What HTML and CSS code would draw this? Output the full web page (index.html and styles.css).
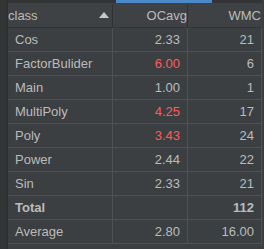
FILE: index.html
```html
<!DOCTYPE html>
<html>
<head>
<meta charset="utf-8">
<link rel="stylesheet" href="styles.css">
</head>
<body>
<div class="page">
  <div class="gutter"></div>
  <div class="table">
    <div class="head">
      <div class="hcell hname"><span>class</span><span class="arrow"></span></div>
      <div class="hcell hnum">OCavg</div>
      <div class="hcell hnum last">WMC</div>
      <div class="tab-indicator"></div>
    </div>
    <div class="row"><div class="c name">Cos</div><div class="c num">2.33</div><div class="c num">21</div></div>
    <div class="row"><div class="c name">FactorBulider</div><div class="c num red">6.00</div><div class="c num">6</div></div>
    <div class="row"><div class="c name">Main</div><div class="c num">1.00</div><div class="c num">1</div></div>
    <div class="row"><div class="c name">MultiPoly</div><div class="c num red">4.25</div><div class="c num">17</div></div>
    <div class="row"><div class="c name">Poly</div><div class="c num red">3.43</div><div class="c num">24</div></div>
    <div class="row"><div class="c name">Power</div><div class="c num">2.44</div><div class="c num">22</div></div>
    <div class="row"><div class="c name">Sin</div><div class="c num">2.33</div><div class="c num">21</div></div>
    <div class="row bold"><div class="c name">Total</div><div class="c num"></div><div class="c num">112</div></div>
    <div class="row"><div class="c name">Average</div><div class="c num">2.80</div><div class="c num">16.00</div></div>
  </div>
</div>
</body>
</html>
```
FILE: styles.css
```css
html, body {
  margin: 0;
  padding: 0;
  background: #3c3f41;
}
body {
  width: 264px;
  height: 249px;
  overflow: hidden;
  font-family: "Liberation Sans", Arial, sans-serif;
  font-size: 13px;
  color: #bbbbbb;
}
.page {
  display: flex;
  height: 249px;
}
.gutter {
  width: 7px;
  background: #323436;
  border-right: 1px solid #2b2d2e;
}
.table {
  width: 254px;
  display: flex;
  flex-direction: column;
}
.head {
  position: relative;
  display: grid;
  grid-template-columns: 105px 75px 74px;
  height: 28px;
  background: #3f4244;
  border-top: 3px solid #323436;
  border-bottom: 1px solid #323436;
  box-sizing: border-box;
}
.tab-indicator {
  position: absolute;
  left: 108px;
  top: -3px;
  width: 96px;
  height: 3px;
  background: #4a88c7;
}
.hcell {
  display: flex;
  align-items: center;
  position: relative;
}
.hcell::after {
  content: "";
  position: absolute;
  right: 0;
  top: 2px;
  bottom: 0;
  width: 1px;
  background: #2f3133;
}
.hname {
  justify-content: space-between;
  padding-right: 4px;
}
.hnum {
  justify-content: flex-end;
  padding-right: 1px;
}
.last::after { display: none; }
.arrow {
  width: 0;
  height: 0;
  border-left: 5px solid transparent;
  border-right: 5px solid transparent;
  border-bottom: 6px solid #c8c8c8;
}
.row {
  display: grid;
  grid-template-columns: 105px 75px 74px;
  height: 24px;
  box-sizing: border-box;
  border-bottom: 1px solid #4e5254;
}
.c {
  display: flex;
  align-items: center;
  border-right: 1px solid #4e5254;
}
.name {
  padding-left: 7px;
}
.num {
  justify-content: flex-end;
  padding-right: 7px;
}
.red { color: #ff5b5b; }
.bold { font-weight: bold; }
```
